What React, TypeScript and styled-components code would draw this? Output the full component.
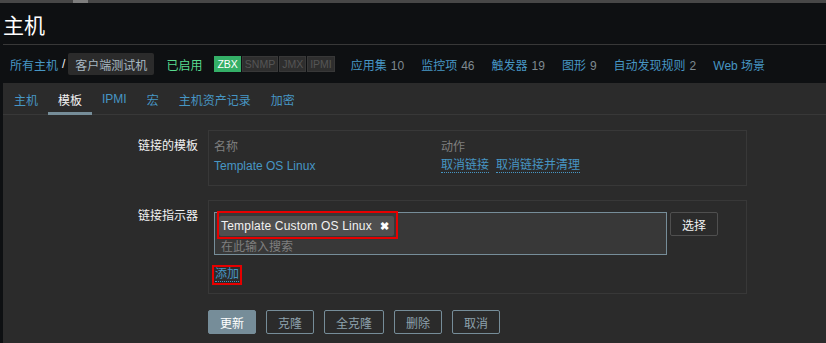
import styled, { createGlobalStyle } from 'styled-components';

const GlobalStyle = createGlobalStyle`
    html, body {
        margin: 0;
        padding: 0;
        background-color: #0e1012;
        font-family: "Liberation Sans", Arial, "Noto Sans CJK SC", sans-serif;
        font-size: 12px;
        color: #f2f2f2;
    }
    * { box-sizing: border-box; }
`;

const Page = styled.div`
    width: 826px;
    height: 343px;
    overflow: hidden;
    display: flex;
    flex-direction: column;
`;

const TopBar = styled.div`
    height: 3px;
    flex-shrink: 0;
    background-color: #474747;
    display: flex;
    padding-left: 73px;
`;

const TopBarThumb = styled.div`
    width: 15px;
    background-color: #7d7d7d;
`;

const Main = styled.div`
    flex: 1;
    padding-left: 3px;
    display: flex;
    flex-direction: column;
`;

const Title = styled.h1`
    margin: 0;
    height: 41px;
    display: flex;
    align-items: center;
    font-size: 21px;
    font-weight: normal;
    color: #ffffff;
    border-bottom: 1px solid #383838;
    box-sizing: content-box;
`;

const NavRow = styled.div`
    height: 38px;
    display: flex;
    align-items: center;
    padding-left: 7px;
`;

const Link = styled.a`
    color: #4796c4;
    text-decoration: none;
    cursor: pointer;
`;

const Slash = styled.span`
    color: #f2f2f2;
    margin: 0 3px 0 4px;
`;

const Crumb = styled.span`
    display: inline-flex;
    align-items: center;
    height: 22px;
    padding: 0 7px;
    background-color: #2b2b2b;
    border-radius: 2px;
    color: #a8b9c3;
`;

const Status = styled.span`
    color: #59db8f;
    margin-left: 12px;
`;

const Badges = styled.div`
    display: flex;
    margin-left: 12px;
    margin-right: 15px;
`;

const Badge = styled.span<{ $on?: boolean }>`
    height: 16px;
    display: inline-flex;
    align-items: center;
    padding: 0 2px;
    font-size: 10.5px;
    margin-right: 1px;
    background-color: ${p => (p.$on ? '#34af67' : '#2e2e2e')};
    color: ${p => (p.$on ? '#ffffff' : '#555555')};
    border: 1px solid ${p => (p.$on ? '#34af67' : '#383838')};
`;

const NavItems = styled.div`
    display: flex;
    gap: 17px;
`;

const Count = styled.span`
    color: #7f8a90;
    margin-left: 4px;
`;

const Panel = styled.div`
    flex: 1;
    background-color: #2b2b2b;
    display: flex;
    flex-direction: column;
`;

const Tabs = styled.div`
    height: 32px;
    display: flex;
    padding-left: 1px;
    box-shadow: inset 0 -1px 0 #383838;
`;

const Tab = styled.div<{ $active?: boolean }>`
    padding: 3px 10px 0;
    display: flex;
    align-items: center;
    color: ${p => (p.$active ? '#f2f2f2' : '#4796c4')};
    border-bottom: 3px solid ${p => (p.$active ? '#768d99' : 'transparent')};
`;

const Form = styled.div`
    padding-top: 15px;
    display: grid;
    grid-template-columns: 205px 539px;
    row-gap: 14px;
`;

const Label = styled.div`
    text-align: right;
    padding-right: 10px;
    padding-top: 6px;
    color: #f2f2f2;
`;

const Box = styled.div<{ $pad: string }>`
    border: 1px solid #383838;
    padding: ${p => p.$pad};
`;

const Table = styled.div`
    display: grid;
    grid-template-columns: 227px 1fr;
`;

const Th = styled.div`
    color: #7f7f7f;
    height: 19px;
    display: flex;
    align-items: center;
`;

const Td = styled.div`
    height: 21px;
    display: flex;
    align-items: center;
    gap: 7px;
`;

const DottedLink = styled.a`
    color: #4796c4;
    border-bottom: 1px dotted #4796c4;
    line-height: 14px;
    cursor: pointer;
`;

const SelectRow = styled.div`
    display: flex;
    gap: 3px;
    align-items: flex-start;
`;

const MultiSelect = styled.div`
    width: 453px;
    height: 43px;
    background-color: #383838;
    border: 1px solid #768d99;
    padding: 3px 4px 0;
    display: flex;
    flex-direction: column;
`;

const Tag = styled.span`
    position: relative;
    align-self: flex-start;
    height: 21px;
    display: inline-flex;
    align-items: center;
    padding: 0 5px 0 2px;
    gap: 8px;
    background-color: #4f4f4f;
    border-radius: 2px;
    color: #f2f2f2;
    font-size: 12px;
    letter-spacing: 0.2px;
    &::after {
        content: '';
        position: absolute;
        top: -5px;
        left: -2px;
        right: -4px;
        bottom: -3px;
        border: 2px solid #e60000;
    }
`;

const TagRemove = styled.span`
    font-size: 11px;
    font-weight: bold;
    color: #ffffff;
`;

const Placeholder = styled.span`
    color: #7f7f7f;
    margin-top: 1px;
    padding-left: 2px;
`;

const Button = styled.button<{ $primary?: boolean }>`
    height: 24px;
    padding: 0 11px;
    font-family: inherit;
    font-size: 12px;
    border-radius: 2px;
    cursor: pointer;
    background-color: ${p => (p.$primary ? '#768d99' : 'transparent')};
    border: 1px solid #768d99;
    color: ${p => (p.$primary ? '#ffffff' : '#8ea2ad')};
`;

const SelectButton = styled(Button)`
    background-color: #2b2b2b;
    border-color: #4f4f4f;
    color: #f2f2f2;
`;

const AddWrap = styled.div`
    margin-top: 10px;
    margin-left: -2px;
    display: inline-flex;
    border: 2px solid #e60000;
    padding: 0 1px 1px 1px;
`;

const Buttons = styled.div`
    grid-column: 2;
    display: flex;
    gap: 10px;
    margin-top: 2px;
`;

export default function App() {
    return (
        <Page>
            <GlobalStyle />
            <TopBar><TopBarThumb /></TopBar>
            <Main>
                <Title>主机</Title>
                <NavRow>
                    <Link>所有主机</Link>
                    <Slash>/</Slash>
                    <Crumb>客户端测试机</Crumb>
                    <Status>已启用</Status>
                    <Badges>
                        <Badge $on>ZBX</Badge>
                        <Badge>SNMP</Badge>
                        <Badge>JMX</Badge>
                        <Badge>IPMI</Badge>
                    </Badges>
                    <NavItems>
                        <span><Link>应用集</Link><Count>10</Count></span>
                        <span><Link>监控项</Link><Count>46</Count></span>
                        <span><Link>触发器</Link><Count>19</Count></span>
                        <span><Link>图形</Link><Count>9</Count></span>
                        <span><Link>自动发现规则</Link><Count>2</Count></span>
                        <span><Link>Web 场景</Link></span>
                    </NavItems>
                </NavRow>
                <Panel>
                    <Tabs>
                        <Tab>主机</Tab>
                        <Tab $active>模板</Tab>
                        <Tab>IPMI</Tab>
                        <Tab>宏</Tab>
                        <Tab>主机资产记录</Tab>
                        <Tab>加密</Tab>
                    </Tabs>
                    <Form>
                        <Label>链接的模板</Label>
                        <Box $pad="5px 5px 9px">
                            <Table>
                                <Th>名称</Th>
                                <Th>动作</Th>
                                <Td><Link>Template OS Linux</Link></Td>
                                <Td>
                                    <DottedLink>取消链接</DottedLink>
                                    <DottedLink>取消链接并清理</DottedLink>
                                </Td>
                            </Table>
                        </Box>
                        <Label>链接指示器</Label>
                        <Box $pad="11px 5px 8px">
                            <SelectRow>
                                <MultiSelect>
                                    <Tag>Template Custom OS Linux <TagRemove>✖</TagRemove></Tag>
                                    <Placeholder>在此输入搜索</Placeholder>
                                </MultiSelect>
                                <SelectButton>选择</SelectButton>
                            </SelectRow>
                            <AddWrap><DottedLink>添加</DottedLink></AddWrap>
                        </Box>
                        <Buttons>
                            <Button $primary>更新</Button>
                            <Button>克隆</Button>
                            <Button>全克隆</Button>
                            <Button>删除</Button>
                            <Button>取消</Button>
                        </Buttons>
                    </Form>
                </Panel>
            </Main>
        </Page>
    );
}
